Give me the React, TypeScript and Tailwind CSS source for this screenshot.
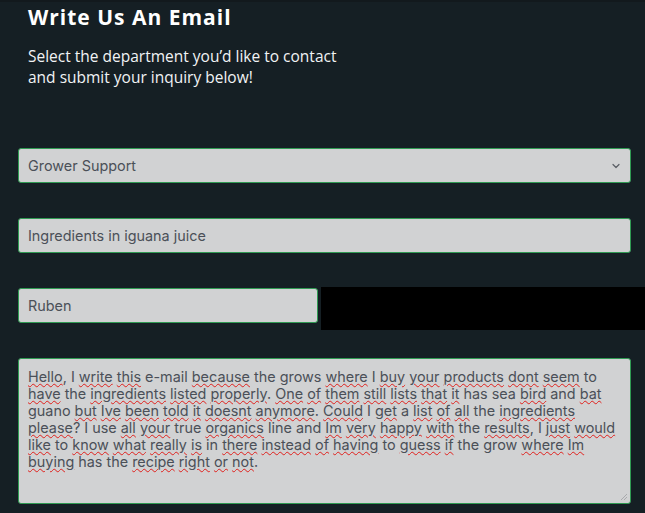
import React from 'react';
import { ChevronDown } from 'lucide-react';

const lines: string[][] = [
  ['*Hello', ', I ', '*write', ' ', '*this', ' e-mail ', '*because', ' the grows ', '*where', ' I ', '*buy', ' ', '*your', ' ', '*products', ' ', '*dont', ' ', '*seem', ' to'],
  ['*have', ' the ', '*ingredients', ' ', '*listed', ' ', '*properly', '. ', '*One', ' ', '*of', ' ', '*them', ' ', '*still', ' ', '*lists', ' ', '*that', ' ', '*it', ' has sea ', '*bird', ' and ', '*bat'],
  ['guano ', '*but', ' ', '*Ive', ' ', '*been', ' ', '*told', ' ', '*it', ' ', '*doesnt', ' ', '*anymore', '. ', '*Could', ' I ', '*get', ' a ', '*list', ' ', '*of', ' ', '*all', ' the ', '*ingredients'],
  ['*please', '? I use ', '*all', ' ', '*your', ' true ', '*organics', ' line and ', '*Im', ' ', '*very', ' ', '*happy', ' ', '*with', ' the ', '*results', ', I ', '*just', ' ', '*would'],
  ['*like', ' to ', '*know', ' ', '*what', ' ', '*really', ' ', '*is', ' in ', '*there', ' ', '*instead', ' ', '*of', ' ', '*having', ' to ', '*guess', ' ', '*if', ' the grow ', '*where', ' ', '*Im'],
  ['*buying', ' has the ', '*recipe', ' ', '*right', ' ', '*or', ' ', '*not', '.'],
];

const fieldCls =
  'h-[35px] rounded-[3px] border border-[#2f9a52] bg-[#d1d2d3] px-[9px] text-[14.4px] text-[#4b5058] flex items-center';

export default function App() {
  return (
    <div className="min-h-[513px] w-[645px] bg-[#151f24] overflow-hidden" style={{ fontFamily: 'Inter, sans-serif' }}>
      <div className="h-[2px] bg-[#12191d]" />
      <div className="pl-[28px] pt-[2px]">
        <h2 className="text-[21px] font-bold text-white leading-[26px] tracking-[1px]" style={{ fontFamily: '"Open Sans", sans-serif' }}>
          Write Us An Email
        </h2>
        <p className="mt-[16px] text-[15.5px] leading-[21px] text-[#f1f3f4]" style={{ fontFamily: '"Open Sans", sans-serif' }}>
          Select the department you’d like to contact
          <br />
          and submit your inquiry below!
        </p>
      </div>

      <div className="pl-[18px] pr-[14px] mt-[60px] flex flex-col gap-[35px]">
        <div className={`${fieldCls} w-full justify-between pr-[8px]`}>
          <span>Grower Support</span>
          <ChevronDown size={12} strokeWidth={2.4} className="text-[#5a5f65]" />
        </div>

        <div className={`${fieldCls} w-full`}>
          <span>Ingredients in iguana juice</span>
        </div>

        <div className="flex items-start h-[35px] -mr-[14px]">
          <div className={`${fieldCls} w-[300px] shrink-0`}>
            <span>Ruben</span>
          </div>
          <div className="ml-[3px] -mt-[1px] h-[43px] flex-1 shrink-0 bg-black" />
        </div>

        <div className="relative h-[146px] rounded-[3px] border border-[#2f9a52] bg-[#d1d2d3] px-[9px] pt-[9px] text-[14.4px] leading-[17px] text-[#4b5058]">
          {lines.map((parts, i) => (
            <div key={i} className="whitespace-pre">
              {parts.map((p, j) =>
                p.startsWith('*') ? (
                  <span key={j} className="underline decoration-wavy decoration-[#e0201c] decoration-[1px] underline-offset-[1px]">
                    {p.slice(1)}
                  </span>
                ) : (
                  <span key={j}>{p}</span>
                )
              )}
            </div>
          ))}
          <svg className="absolute right-[2px] bottom-[2px]" width="8" height="8" viewBox="0 0 8 8">
            <path d="M7 1L1 7M7 4L4 7" stroke="#a8aaad" strokeWidth="1" />
          </svg>
        </div>
      </div>
    </div>
  );
}
